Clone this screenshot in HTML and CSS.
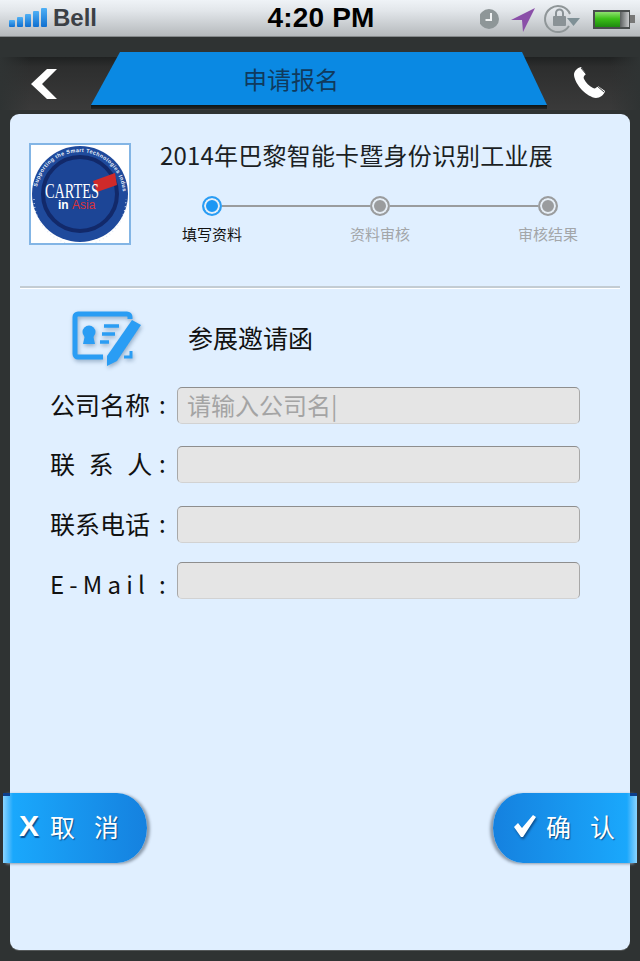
FILE: index.html
```html
<!DOCTYPE html>
<html lang="zh">
<head>
<meta charset="utf-8">
<title>申请报名</title>
<link rel="stylesheet" href="styles.css">
</head>
<body>
<header class="statusbar">
  <div class="status-left">
    <svg class="signal" width="38" height="20" viewBox="0 0 38 20"><defs><linearGradient id="sig" x1="0" y1="0" x2="0" y2="1"><stop offset="0" stop-color="#4fb0f5"/><stop offset="1" stop-color="#0f6fd0"/></linearGradient></defs><rect x="0" y="12" width="6" height="7" rx="1" fill="url(#sig)"/><rect x="8" y="9" width="6" height="10" rx="1" fill="url(#sig)"/><rect x="16" y="6" width="6" height="13" rx="1" fill="url(#sig)"/><rect x="24" y="3" width="6" height="16" rx="1" fill="url(#sig)"/><rect x="32" y="0" width="6" height="19" rx="1" fill="url(#sig)"/></svg>
    <span class="carrier">Bell</span>
  </div>
  <div class="time">4:20 PM</div>
  <div class="status-right">
    <svg width="156" height="34" viewBox="0 0 156 34">
      <defs>
        <linearGradient id="batt" x1="0" y1="0" x2="0" y2="1"><stop offset="0" stop-color="#8fe070"/><stop offset=".45" stop-color="#3cc018"/><stop offset="1" stop-color="#1f8a10"/></linearGradient>
        <linearGradient id="battEnd" x1="0" y1="0" x2="1" y2="0"><stop offset="0" stop-color="#5a5e5e"/><stop offset="1" stop-color="#c8cacc"/></linearGradient>
      </defs>
      <circle cx="9" cy="18" r="10" fill="#8e9698"/><path d="M11 12v7H5.500" fill="none" stroke="#f0f2f3" stroke-width="2"/>
      <path d="M55 7 L31 19 L42 19 L43 31 Z" fill="#8a4fa8"/>
      <path d="M90 13A13 13 0 1 0 89 25" fill="none" stroke="#8f9698" stroke-width="2"/>
      <path d="M87 17h13l-6.500 8z" fill="#7f9096"/>
      <rect x="73" y="15" width="13" height="10" rx="1" fill="#8a9296"/><path d="M76 15v-3a3.500 3.500 0 0 1 7 0v3" fill="none" stroke="#8a9296" stroke-width="2"/>
      <rect x="113" y="9" width="37" height="19" fill="#4a4e4e"/><rect x="115" y="11" width="25" height="15" fill="url(#batt)"/><rect x="140" y="11" width="9" height="15" fill="url(#battEnd)"/><rect x="150" y="14" width="5" height="8" fill="#777"/>
    </svg>
  </div>
</header>

<nav class="navbar">
  <div class="nav-side nav-back">
    <svg width="28" height="32" viewBox="0 0 28 32"><path d="M17 1H27L12 16 27 31H17L1 16Z" fill="#fff"/></svg>
  </div>
  <div class="tab"><h1 class="tab-title">申请报名</h1></div>
  <div class="nav-side nav-call">
    <svg width="34" height="34" viewBox="0 0 34 34"><path d="M9 2 L14 9 C12 11 11 12 12 14 C14 18 17 21 21 23 C23 24 24 23 26 21 L33 26 C32 30 28 33 24 33 C15 32 3 20 2 10 C2 6 5 3 9 2Z" fill="#fff"/><path d="M9 3L14 9M25 21L32 27" stroke="#3a3c3c" stroke-width="1"/></svg>
  </div>
</nav>

<main class="card">
  <section class="expo">
    <div class="logo">
      <svg width="98" height="98" viewBox="0 0 98 98">
        <defs><path id="arc" d="M6 42A43.500 43.500 0 0 1 92 47"/></defs>
        <circle cx="49" cy="49" r="48" fill="#1f4a9c"/>
        <path d="M3 54A46 46 0 0 0 95 54" fill="none" stroke="#dfe8f5" stroke-width="1.200" stroke-dasharray="1 3"/>
        <circle cx="49" cy="49" r="37" fill="#1c4596" stroke="#12296a" stroke-width="4"/>
        <text class="logo-ring" textLength="132"><textPath href="#arc">Supporting the Smart Technologies Industry</textPath></text>
        <path d="M62 36L84 28 86 40 66 47Z" fill="#cf2a2a"/>
        <text class="logo-cartes" x="14" y="53" textLength="54" lengthAdjust="spacingAndGlyphs">CARTES</text>
        <text class="logo-in" x="27" y="64">in <tspan class="logo-asia">Asia</tspan></text>
      </svg>
    </div>
    <div class="expo-info">
      <h2 class="expo-title">2014年巴黎智能卡暨身份识别工业展</h2>
      <div class="track">
        <span class="dot dot-on"></span><span class="line"></span><span class="dot"></span><span class="line"></span><span class="dot"></span>
      </div>
      <div class="step-labels">
        <span class="step-label step-on">填写资料</span>
        <span class="step-label">资料审核</span>
        <span class="step-label">审核结果</span>
      </div>
    </div>
  </section>
  <hr class="divider">

  <section class="form-head">
    <svg class="form-icon" width="72" height="60" viewBox="0 0 72 60">
      <path d="M33 50H8a3 3 0 0 1-3-3V10a3 3 0 0 1 3-3H57a3 3 0 0 1 3 3v2" fill="none" stroke="#2a9df4" stroke-width="5"/>
      <circle cx="19" cy="25" r="6.500" fill="#2a9df4"/><path d="M15 28h8l2 9H13z" fill="#2a9df4"/>
      <path d="M34 19h15M32 27h13M30 35h9" stroke="#2a9df4" stroke-width="3.500"/>
      <path d="M62 13L71 18 47 54 37 59 37 49Z" fill="#2a9df4"/>
      <path d="M61 44v6H54" fill="none" stroke="#2a9df4" stroke-width="3"/>
    </svg>
    <span class="form-title">参展邀请函</span>
  </section>

  <form class="form">
    <label class="row"><span class="row-label">公司名称</span><span class="colon">:</span><input class="field" placeholder="请输入公司名|"></label>
    <label class="row row-b"><span class="row-label row-label-wide">联 系 人</span><span class="colon">:</span><input class="field"></label>
    <label class="row row-d"><span class="row-label">联系电话</span><span class="colon">:</span><input class="field"></label>
    <label class="row row-c"><span class="row-label row-label-latin">E-Mail</span><span class="colon colon-low">:</span><input class="field"></label>
  </form>

  <footer class="actions">
    <button class="btn btn-cancel" type="button"><span class="btn-x">X</span><span class="btn-text">取 消</span></button>
    <button class="btn btn-ok" type="button"><svg class="btn-check" width="24" height="24" viewBox="0 0 24 24"><path d="M1 13L5 9 9 14 20 1 23 3 10 23H8Z" fill="#fff"/></svg><span class="btn-text">确 认</span></button>
  </footer>
</main>
</body>
</html>
```
FILE: styles.css
```css
* { box-sizing: border-box; }
html, body { margin: 0; padding: 0; }
body {
  width: 640px;
  height: 961px;
  overflow: hidden;
  background: #2f3333;
  font-family: "Noto Sans CJK SC", "Liberation Sans", sans-serif;
  color: #111;
}

/* status bar */
.statusbar {
  height: 37px;
  display: grid;
  grid-template-columns: 1fr auto 1fr;
  align-items: center;
  background: linear-gradient(#eff3f7, #e2e6ea 30%, #b5b9bc);
  border-bottom: 1px solid #84888a;
  font-family: "Liberation Sans", sans-serif;
}
.status-left { display: flex; align-items: center; gap: 6px; padding-left: 9px; }
.signal { display: block; }
.carrier { font-size: 24px; font-weight: 700; color: #3b4045; }
.time { font-size: 28px; font-weight: 700; color: #000; letter-spacing: .2px; padding-left: 2px; }
.status-right { display: flex; justify-content: flex-end; padding-right: 4px; }
.status-right svg { display: block; }

/* nav bar */
.navbar {
  height: 77px;
  padding-top: 15px;
  display: grid;
  grid-template-columns: 91px 456px 93px;
  align-items: start;
  background:
    linear-gradient(90deg, #2f3333, rgba(47, 51, 51, 0) 30px, rgba(47, 51, 51, 0) 610px, #2f3333),
    linear-gradient(#2f3333 20px, #1f2121 20px, #2d2e2e 30px, #3a3a3a 73px, #2f3333 73px);
}
.nav-side {
  height: 53px;
  margin-top: 5px;
  display: flex;
  align-items: center;
  justify-content: flex-start;
}
.nav-back { padding-left: 30px; }
.nav-call { padding: 0 0 4px 25px; }
.tab {
  height: 57px;
  background: linear-gradient(#0a89e3 53px, #0d1416 53px, #242626 57px);
  clip-path: polygon(29px 0, 431px 0, 456px 53px, 456px 57px, 0 57px, 0 53px);
  display: flex;
  justify-content: center;
  padding: 9px 56px 0 0;
}
.tab-title { margin: 0; font-size: 24px; line-height: 36px; font-weight: 400; color: #103a5e; }

/* card */
.card {
  height: 836px;
  margin: 0 10px;
  display: flex;
  flex-direction: column;
  background: #e0efff;
  border-radius: 9px;
  box-shadow: 0 1px 0 #55595a;
}
.expo { display: flex; gap: 29px; padding: 29px 0 0 19px; }
.logo {
  width: 102px;
  height: 102px;
  flex: none;
  border: 2px solid #83b5e5;
  background: #fff;
}
.logo svg { display: block; }
.logo-ring { font: 700 5.400px "Liberation Sans", sans-serif; fill: #eef3fb; }
.logo-cartes { font: 400 21px "Liberation Serif", serif; fill: #fff; }
.logo-in { font: 700 12px "Liberation Sans", sans-serif; fill: #fff; }
.logo-asia { fill: #d8323a; font-weight: 400; }
.expo-info { flex: 1; display: flex; flex-direction: column; }
.expo-title { margin: -2px 0 0; font-size: 24px; line-height: 28px; font-weight: 400; letter-spacing: .2px; color: #1b1f24; white-space: nowrap; }
.track {
  display: flex;
  align-items: center;
  margin: 27px 72px 0 42px;
}
.dot {
  width: 20px;
  height: 20px;
  flex: none;
  border-radius: 50%;
  border: 2px solid #9a9c9e;
  background: #9a9c9e;
  box-shadow: inset 0 0 0 2px #e6eef6;
}
.dot-on { border-color: #2a9df4; background: #1c97f4; }
.line { flex: 1; height: 2px; background: #9a9c9e; }
.step-labels {
  display: flex;
  justify-content: space-between;
  margin: 8px 52px 0 22px;
}
.step-label { font-size: 15px; line-height: 20px; color: #a3a6a9; }
.step-on { color: #111; }

.divider {
  margin: 41px 10px 0;
  height: 3px;
  border: 0;
  border-top: 2px solid #c3ccd3;
  border-bottom: 1px solid #fff;
}

.form-head {
  display: flex;
  align-items: center;
  gap: 46px;
  margin-top: 18px;
  padding-left: 60px;
  height: 60px;
}
.form-icon { display: block; flex: none; filter: drop-shadow(1px 2px 2px rgba(30, 70, 110, .4)); }
.form-title { font-size: 25px; line-height: 36px; color: #111; }

.form { display: flex; flex-direction: column; padding: 0 50px 0 40px; margin-top: 19px; }
.row { display: flex; align-items: center; height: 38px; }
.row-b { margin-top: 21px; }
.row-d { margin-top: 22px; }
.row-c { margin-top: 18px; }
.row-label { width: 101px; margin-bottom: 2px; font-size: 25px; line-height: 38px; white-space: nowrap; color: #111; }
.row-label-wide { word-spacing: 8px; }
.row-label-latin { margin: 8px 0 0; letter-spacing: 5.200px; font-size: 24px; font-family: "Noto Sans CJK SC", "Noto Sans", sans-serif; }
.colon { width: 26px; margin-bottom: 2px; padding-left: 8px; font-size: 24px; line-height: 38px; color: #111; }
.colon-low { margin: 8px 0 0; }
.field {
  flex: 1;
  min-width: 0;
  height: 37px;
  padding: 0 9px 2px;
  border: 1px solid #a8a8a8;
  border-bottom-color: #d2d2d2;
  border-top-color: #8e8e8e;
  border-radius: 5px;
  background: #e5e5e5;
  font-family: inherit;
  font-size: 24px;
  color: #111;
  outline: none;
}
.field::placeholder { color: #a4a4a4; opacity: 1; }

/* action buttons */
.actions {
  margin: auto -7px 87px;
  display: flex;
  justify-content: space-between;
}
.btn {
  position: relative;
  width: 144px;
  height: 70px;
  padding: 0 0 5px;
  border: 0;
  display: flex;
  align-items: center;
  color: #fff;
  font-family: inherit;
}
.btn::before {
  content: "";
  position: absolute;
  top: 0;
  width: 7px;
  height: 3px;
  background: #0c3f8c;
}
.btn-cancel {
  padding-left: 16px;
  background: linear-gradient(90deg, #8ad5ff, #3fb4fb 7px, #1aa8fc 10px, #1581df);
  border-radius: 0 30px 30px 0 / 0 35px 35px 0;
  box-shadow: 3px 1px 3px #8d9bab;
}
.btn-cancel::before { left: 0; }
.btn-ok {
  padding-left: 20px;
  background: linear-gradient(270deg, #8ad5ff, #3fb4fb 7px, #1aa8fc 10px, #1581df);
  border-radius: 30px 0 0 30px / 35px 0 0 35px;
  box-shadow: -3px 1px 3px #8d9bab;
}
.btn-ok::before { right: 0; }
.btn-x {
  width: 31px;
  text-align: left;
  font: 700 30px "Liberation Sans", sans-serif;
  text-shadow: 1px 2px 1px #0b4f8f;
}
.btn-check { display: block; margin-right: 9px; filter: drop-shadow(1px 2px 1px #0b4f8f); }
.btn-text {
  font-size: 25px;
  line-height: 36px;
  word-spacing: 13.500px;
  white-space: nowrap;
  text-shadow: 1px 1px 1px #0b4f8f;
}
```
